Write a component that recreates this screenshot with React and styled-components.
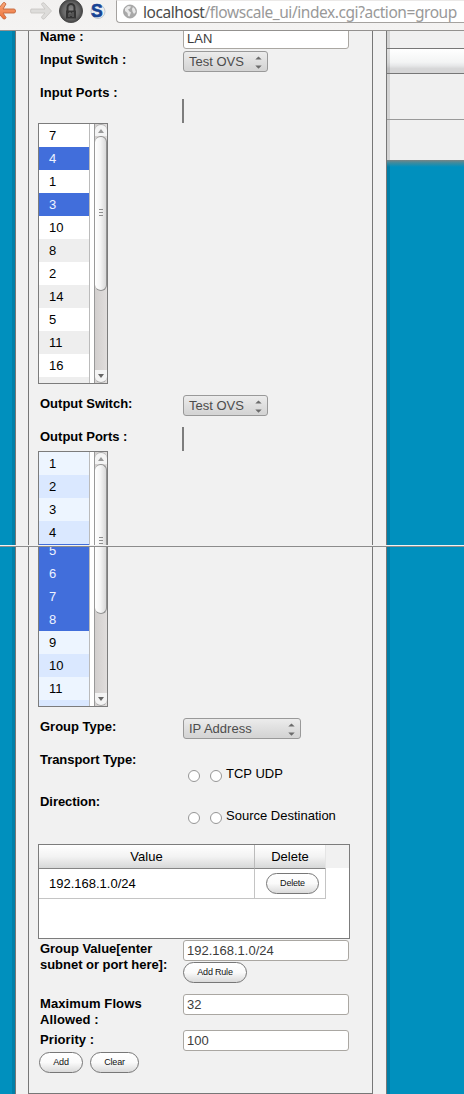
import React from "react";
import styled, { createGlobalStyle } from "styled-components";

const Global = createGlobalStyle`
  *, *::before, *::after { box-sizing: border-box; }
  html, body { margin: 0; padding: 0; background: #0090be; overflow: hidden; }
  body { font: 13px/16px "Liberation Sans", Arial, sans-serif; color: #000; }
`;

const Page = styled.div`
  width: 464px;
  height: 1094px;
  overflow: hidden;
  display: flex;
  flex-direction: column;
`;

const Toolbar = styled.header`
  flex: none;
  display: flex;
  align-items: flex-start;
  height: 31px;
  background: linear-gradient(#f2f1f0, #f4f3f2);
  border-bottom: 1px solid #93918f;
`;

const ToolIcons = styled.svg`
  flex: none;
  display: block;
  width: 116px;
  height: 30px;
`;

const AddressBar = styled.div`
  flex: 1;
  display: flex;
  align-items: center;
  height: 23px;
  padding: 0 0 0 6px;
  background: #fff;
  border: 1px solid #a5a29f;
  border-width: 0 0 1px 1px;
  border-bottom-left-radius: 4px;
  border-top: 1px solid #ebe9e8;
`;

const Url = styled.span`
  margin-left: 6px;
  font: 15.5px/20px "Noto Sans", "Open Sans", sans-serif;
  letter-spacing: -0.44px;
  white-space: nowrap;
  color: #999;
  b { font-weight: 400; color: #4b4b4b; }
`;

const Pane = styled.section`
  flex: none;
  display: flex;
  height: ${(p) => p.$height}px;
  overflow: hidden;
`;

const Seam = styled.div`
  flex: none;
  height: 2px;
  background: #f2f2f2;
  border-bottom: 1px solid #8c8c8c;
`;

const Gutter = styled.div`
  flex: none;
  width: 15px;
  background: linear-gradient(90deg, #0090be 12px, #0080a9 12px);
`;

const Dialog = styled.div`
  flex: none;
  width: 372px;
  padding: 0 13px 0 12px;
  background: #f1f1f1;
  border: 1px solid #777;
  border-width: 0 1px;
`;

const Frame = styled.div`
  height: 100%;
  padding-left: 9px;
  border: 1px solid #777;
  border-width: ${(p) => (p.$last ? "0 1px 1px" : "0 1px")};
`;

const Backdrop = styled.div`
  flex: 1;
  background: linear-gradient(90deg, rgba(0, 0, 0, 0.12) 3px, transparent 3px) #0090be;
`;

const BackWindow = styled.div`
  height: 137px;
  background: linear-gradient(90deg, #d3d3d3 3px, #f0f0f0 3px);
  border-bottom: 8px solid transparent;
  background-clip: padding-box;
`;

const BackRow = styled.div`
  height: ${(p) => p.$height}px;
  border-bottom: ${(p) => (p.$line ? `1px solid ${p.$line}` : "0")};
  background: ${(p) =>
    p.$header
      ? "linear-gradient(90deg, rgba(0,0,0,.12) 3px, transparent 3px), linear-gradient(#fff, #f3f4f4 55%, #e6e7e8 70%, #d6d6d7 82%, #d6d6d7)"
      : "none"};
`;

const DropShadow = styled.div`
  height: 7px;
  background: linear-gradient(#7b8585, #3f8b9e 40%, rgba(0, 144, 190, 0));
`;

const FormRow = styled.div`
  display: flex;
  align-items: flex-start;
  height: ${(p) => p.$height}px;
`;

const Label = styled.label`
  flex: none;
  width: 145px;
  padding: ${(p) => p.$top || 0}px 0 0 2px;
  line-height: ${(p) => (p.$tight ? 12 : 16)}px;
  letter-spacing: ${(p) => p.$tracking || 0}px;
  font-weight: 700;
  white-space: pre-line;
`;

const Field = styled.div`
  display: flex;
  flex-direction: column;
  align-items: flex-start;
  padding-top: ${(p) => p.$top || 0}px;
`;

const Input = styled.input`
  display: block;
  width: 166px;
  height: 21px;
  margin: 0 0 1px;
  margin-top: ${(p) => p.$pull || 0}px;
  padding: 0 3px;
  font: inherit;
  color: #3c3c3c;
  background: #fff;
  border: 1px solid #aaa7a2;
  border-radius: 3px;
  outline: 0;
`;

const SelectBox = styled.div`
  display: flex;
  align-items: center;
  justify-content: space-between;
  width: ${(p) => p.$width}px;
  height: 21px;
  padding: 0 5px;
  color: #4c4c4c;
  background: linear-gradient(#ececec, #d5d5d5 90%);
  border: 1px solid #999;
  border-radius: 3px;
  white-space: nowrap;
  svg { margin-top: 2px; flex: none; }
`;

const EmptyBar = styled.div`
  width: 2px;
  height: 24px;
  margin-left: -1px;
  background: #7d7d7d;
`;

const ListBox = styled.div`
  display: flex;
  width: 70px;
  height: ${(p) => p.$height}px;
  overflow: hidden;
  background: #fff;
  border: 1px solid #7c7c7c;
  border-top-width: ${(p) => (p.$cutTop ? 0 : 1)}px;
  border-bottom-width: ${(p) => (p.$cutBottom ? 0 : 1)}px;
`;

const Items = styled.div`
  flex: none;
  width: 51px;
  height: 100%;
  overflow: hidden;
  border-right: 1px solid #bbb;
`;

const Item = styled.div`
  height: 23px;
  margin-top: ${(p) => p.$shift || 0}px;
  padding-left: 10px;
  line-height: 23px;
  color: ${(p) => (p.$bg === "#416edb" ? "#eef3ff" : "#000")};
  background: ${(p) => p.$bg};
`;

const ScrollTrack = styled.div`
  display: flex;
  flex-direction: column;
  flex: none;
  width: 13px;
  height: 100%;
  margin-left: 4px;
  background: linear-gradient(90deg, #d2cfce, #e0dddc);
  border: 1px solid #999;
  border-width: 0 0 0 1px;
`;

const ScrollButton = styled.div`
  display: flex;
  flex: none;
  align-items: center;
  justify-content: center;
  height: ${(p) => (p.$up ? 12 : 13)}px;
  background: #f4f4f4;
  border: 1px solid #aaa;
  border-radius: ${(p) => (p.$up ? "6px 6px 0 0" : "0 0 6px 6px")};
  border-width: ${(p) => (p.$up ? "1px 0 0" : "0 0 1px")};
  margin-top: ${(p) => (p.$up ? 0 : "auto")};
`;

const Thumb = styled.div`
  display: flex;
  flex: none;
  justify-content: center;
  height: ${(p) => p.$height}px;
  padding-top: ${(p) => p.$grip || 0}px;
  background: linear-gradient(90deg, #fff, #f4f4f4 50%, #d9d9d9);
  border: 1px solid #929292;
  border-width: ${(p) => (p.$cut === "top" ? "0 1px 1px 0" : p.$cut === "bottom" ? "1px 1px 0 0" : "1px 1px 1px 0")};
  border-radius: ${(p) => (p.$cut === "top" ? "0 0 6px 6px" : p.$cut === "bottom" ? "6px 6px 0 0" : "6px")};
`;

const Grip = styled.i`
  width: 4px;
  height: 7px;
  background: repeating-linear-gradient(#8e8e8e 0 1px, transparent 1px 3px);
`;

const RadioLine = styled.div`
  display: flex;
  align-items: center;
  padding-left: 5px;
  white-space: nowrap;
`;

const Radio = styled.span`
  width: 12px;
  height: 12px;
  margin: 4px 10px 0 0;
  background: #fff;
  border: 1px solid #969696;
  border-radius: 50%;
  & + & { margin-right: 4px; }
`;

const Table = styled.div`
  display: grid;
  grid-template-columns: 216px 71px 1fr;
  grid-template-rows: 24px 30px;
  width: 312px;
  height: 95px;
  background: #fff;
  border: 1px solid #7c7c7c;
`;

const HeadCell = styled.div`
  display: flex;
  align-items: center;
  justify-content: center;
  background: linear-gradient(#fff, #f3f3f3 50%, #d7d8d8);
  border-right: 1px solid #bbb;
  border-bottom: 1px solid #858585;
  &:nth-child(2) { border-right-color: #e5e5e5; }
`;

const HeadFill = styled.div`
  height: 23px;
  background: #f1f1f1;
`;

const Cell = styled.div`
  display: flex;
  align-items: center;
  justify-content: ${(p) => (p.$center ? "center" : "flex-start")};
  padding-left: ${(p) => (p.$center ? 5 : 10)}px;
  border: 1px solid #c4c4c4;
  border-width: 0 1px 1px 0;
`;

const Button = styled.button`
  flex: none;
  width: ${(p) => p.$width}px;
  height: 21px;
  margin: 0;
  padding: 0 0 2px;
  font: 9px/12px "Liberation Sans", Arial, sans-serif;
  letter-spacing: -0.2px;
  color: #111;
  background: linear-gradient(#fff, #fafafa 50%, #dadada);
  border: 1px solid #777;
  border-radius: 11px;
`;

const Actions = styled.div`
  display: flex;
  gap: 7px;
  padding-left: 1px;
`;

const BLUE = "#416edb";
const GRAY = "#eeeeee";
const ICE = "#edf5ff";
const SKY = "#dae8ff";

const inputPorts = [
  ["7", "#fff"], ["4", BLUE], ["1", "#fff"], ["3", BLUE], ["10", "#fff"], ["8", GRAY],
  ["2", "#fff"], ["14", GRAY], ["5", "#fff"], ["11", GRAY], ["16", "#fff"], ["", GRAY],
];
const outputPortsTop = [["1", ICE], ["2", SKY], ["3", ICE], ["4", SKY], ["", BLUE]];
const outputPortsBottom = [
  ["5", BLUE], ["6", BLUE], ["7", BLUE], ["8", BLUE], ["9", ICE], ["10", SKY], ["11", ICE], ["", SKY],
];

function PortItems({ ports, shift }) {
  return (
    <Items>
      {ports.map(([name, bg], i) => (
        <Item key={i} $bg={bg} $shift={i === 0 ? shift : 0}>{name}</Item>
      ))}
    </Items>
  );
}

function Arrow({ up, color }) {
  return (
    <svg width="6" height="4" viewBox="0 0 6 4">
      <path d={up ? "M0 4L3 0L6 4Z" : "M0 0L3 4L6 0Z"} fill={color} />
    </svg>
  );
}

function Select({ width, children }) {
  return (
    <SelectBox $width={width}>
      {children}
      <svg width="7" height="13" viewBox="0 0 7 13">
        <path d="M0.3 3.6L3.5 0.4L6.7 3.6ZM0.3 9.6L3.5 12.8L6.7 9.6Z" fill="#6b6b6b" />
      </svg>
    </SelectBox>
  );
}

function BrowserToolbar() {
  return (
    <Toolbar>
      <ToolIcons viewBox="0 0 116 30">
        <defs>
          <linearGradient id="back" x1="0" y1="0" x2="0" y2="1">
            <stop offset="0" stopColor="#f9a87a" />
            <stop offset="1" stopColor="#ec7038" />
          </linearGradient>
          <radialGradient id="disc">
            <stop offset="0" stopColor="#8a8a8a" />
            <stop offset="0.7" stopColor="#666" />
            <stop offset="1" stopColor="#444" />
          </radialGradient>
        </defs>
        <path d="M-3 10.500L3.500 2.500Q5 2 6 4L3 9H14Q15.500 9 15.500 11T14 13H3L6 17.500Q5.500 19.500 3.500 19L-3 11.500Z" fill="url(#back)" stroke="#c4673b" strokeWidth="0.900" />
        <path d="M31 9H45L41.500 4.500Q41.500 2.500 44 2.800L51.500 11L44 19.200Q41.500 19 41.500 17L45 13H31Q30 11 31 9Z" fill="#dddcda" stroke="#c6c4c2" strokeWidth="0.800" />
        <circle cx="71" cy="11" r="11.500" fill="url(#disc)" stroke="#4a4a4a" />
        <path d="M67.500 11V7.500A3.500 3.500 0 0 1 74.500 7.500V11" fill="none" stroke="#333" strokeWidth="2" />
        <rect x="66" y="10.500" width="10" height="8" fill="#333" />
        <path d="M69 17V13H71V16M73 12V17" fill="none" stroke="#777" strokeWidth="1" />
        <circle cx="98" cy="11.500" r="7" fill="#e9edf2" stroke="#c2c6cd" />
        <text x="91" y="17" fontFamily="Liberation Sans, Arial, sans-serif" fontWeight="700" fontSize="17.500" fill="#174394" stroke="#174394" strokeWidth="0.600">S</text>
      </ToolIcons>
      <AddressBar>
        <svg width="14" height="16" viewBox="0 0 14 16">
          <circle cx="7" cy="7.500" r="6.500" fill="#a9a9a9" stroke="#999" strokeWidth="0.800" />
          <path d="M2 4.500L5 2L8 2.500L7 4.500L5 5.500L6.500 7.500L8 8.500L6.500 12.500L5 12L4.500 9L2 7ZM10 3L12 5L12.800 8L11 10L9.500 7.500L9 5Z" fill="#e8e8e8" />
        </svg>
        <Url><b>localhost</b>/flowscale_ui/index.cgi?action=group</Url>
      </AddressBar>
    </Toolbar>
  );
}

function UpperPane() {
  return (
    <Pane $height={514}>
      <Gutter />
      <Dialog>
        <Frame>
          <FormRow $height={20}>
            <Label $tight $tracking={0.05}>Name :</Label>
            <Field><Input $pull={-3} defaultValue="LAN" /></Field>
          </FormRow>
          <FormRow $height={34}>
            <Label $top={1} $tracking={0.08}>Input Switch :</Label>
            <Field><Select width={85}>Test OVS</Select></Field>
          </FormRow>
          <FormRow $height={38}>
            <Label $tracking={0.08}>Input Ports :</Label>
            <Field $top={14}><EmptyBar /></Field>
          </FormRow>
          <ListBox $height={261}>
            <PortItems ports={inputPorts} />
            <ScrollTrack>
              <ScrollButton $up><Arrow up color="#999" /></ScrollButton>
              <Thumb $height={155} $grip={72}><Grip /></Thumb>
              <ScrollButton><Arrow color="#666" /></ScrollButton>
            </ScrollTrack>
          </ListBox>
          <FormRow $height={43}>
            <Label $top={12}>Output Switch:</Label>
            <Field $top={11}><Select width={85}>Test OVS</Select></Field>
          </FormRow>
          <FormRow $height={24}>
            <Label $top={2}>Output Ports :</Label>
            <Field><EmptyBar /></Field>
          </FormRow>
          <ListBox $height={94} $cutBottom>
            <PortItems ports={outputPortsTop} />
            <ScrollTrack>
              <ScrollButton $up><Arrow up color="#999" /></ScrollButton>
              <Thumb $height={81} $grip={72} $cut="bottom"><Grip /></Thumb>
            </ScrollTrack>
          </ListBox>
        </Frame>
      </Dialog>
      <Backdrop>
        <BackWindow>
          <BackRow $height={18} $line="#777" />
          <BackRow $height={25} $line="#777" $header />
          <BackRow $height={46} $line="#999" />
          <BackRow $height={40} />
          <DropShadow />
        </BackWindow>
      </Backdrop>
    </Pane>
  );
}

function LowerPane() {
  return (
    <Pane $height={547}>
      <Gutter />
      <Dialog>
        <Frame $last>
          <ListBox $height={160} $cutTop>
            <PortItems ports={outputPortsBottom} shift={-8} />
            <ScrollTrack>
              <Thumb $height={67} $cut="top" />
              <ScrollButton><Arrow color="#666" /></ScrollButton>
            </ScrollTrack>
          </ListBox>
          <FormRow $height={45}>
            <Label $top={12}>Group Type:</Label>
            <Field $top={11}><Select width={118}>IP Address</Select></Field>
          </FormRow>
          <FormRow $height={42}>
            <Label $tracking={-0.06}>Transport Type:</Label>
            <Field $top={14}><RadioLine><Radio /><Radio />TCP UDP</RadioLine></Field>
          </FormRow>
          <FormRow $height={50}>
            <Label $tracking={-0.06}>Direction:</Label>
            <Field $top={14}><RadioLine><Radio /><Radio />Source Destination</RadioLine></Field>
          </FormRow>
          <Table>
            <HeadCell>Value</HeadCell>
            <HeadCell>Delete</HeadCell>
            <HeadFill />
            <Cell>192.168.1.0/24</Cell>
            <Cell $center><Button $width={53}>Delete</Button></Cell>
          </Table>
          <FormRow $height={55}>
            <Label $top={2} $tracking={-0.03}>{"Group Value[enter\nsubnet or port here]:"}</Label>
            <Field $top={1}>
              <Input defaultValue="192.168.1.0/24" />
              <Button $width={64}>Add Rule</Button>
            </Field>
          </FormRow>
          <FormRow $height={36}>
            <Label $top={2} $tracking={0.1}>{"Maximum Flows\nAllowed :"}</Label>
            <Field><Input defaultValue="32" /></Field>
          </FormRow>
          <FormRow $height={22}>
            <Label $top={2} $tracking={0.08}>Priority :</Label>
            <Field><Input defaultValue="100" /></Field>
          </FormRow>
          <Actions>
            <Button $width={44}>Add</Button>
            <Button $width={49}>Clear</Button>
          </Actions>
        </Frame>
      </Dialog>
      <Backdrop />
    </Pane>
  );
}

export default function App() {
  return (
    <Page>
      <Global />
      <BrowserToolbar />
      <UpperPane />
      <Seam />
      <LowerPane />
    </Page>
  );
}
